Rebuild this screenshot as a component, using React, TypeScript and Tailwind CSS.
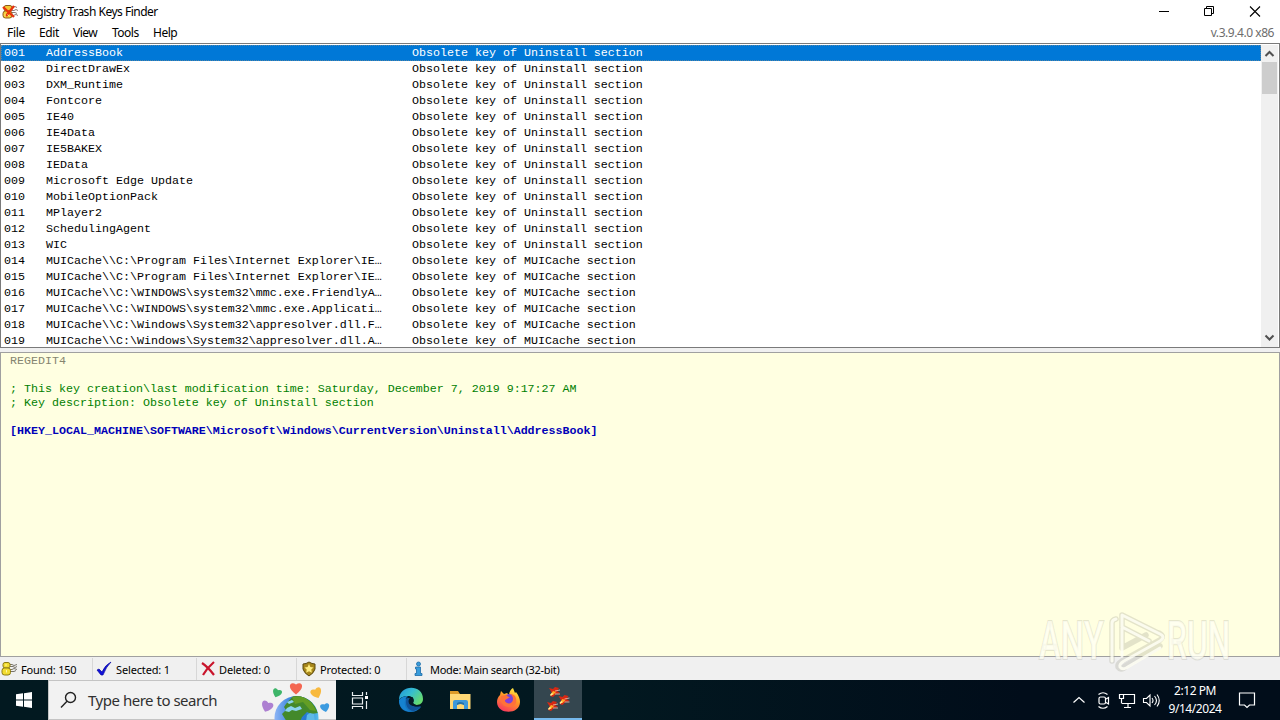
import React from "react";

const uninstall = ["AddressBook", "DirectDrawEx", "DXM_Runtime", "Fontcore", "IE40", "IE4Data", "IE5BAKEX", "IEData", "Microsoft Edge Update", "MobileOptionPack", "MPlayer2", "SchedulingAgent", "WIC"];
const muiCache = [
  "MUICache\\\\C:\\Program Files\\Internet Explorer\\IE…",
  "MUICache\\\\C:\\Program Files\\Internet Explorer\\IE…",
  "MUICache\\\\C:\\WINDOWS\\system32\\mmc.exe.FriendlyA…",
  "MUICache\\\\C:\\WINDOWS\\system32\\mmc.exe.Applicati…",
  "MUICache\\\\C:\\Windows\\System32\\appresolver.dll.F…",
  "MUICache\\\\C:\\Windows\\System32\\appresolver.dll.A…",
];
const rows = [
  ...uninstall.map((name) => ({ name, note: "Obsolete key of Uninstall section" })),
  ...muiCache.map((name) => ({ name, note: "Obsolete key of MUICache section" })),
];

function AppIcon() {
  return (
    <svg width="17" height="16" viewBox="0 0 17 16" className="shrink-0">
      <g fill="none" stroke="#8a7a78" strokeWidth="1"><path d="M10 3.500l3-1 2 1M10 6.500h2l2-1 2 1M10 8.500h3l2 1M11 11.500l3-1 2 1" /></g>
      <rect x="2" y="1.500" width="8" height="5.500" rx="2" fill="#f4c832" stroke="#8c5a1c" />
      <rect x="1" y="7" width="9" height="7" rx="2.500" fill="#f4c832" stroke="#8c5a1c" />
      <path d="M1 3l11 10M12 2L4 12" fill="none" stroke="#e8320c" strokeWidth="2.300" />
      <path d="M3 9.500v3M5.500 10.500l2 2" stroke="#ffe87a" />
    </svg>
  );
}

function KeyIcon() {
  return (
    <svg width="17" height="16" viewBox="0 0 17 16" className="shrink-0">
      <g fill="none" stroke="#77736a"><path d="M9 3.500h2l2 1 3-1M9 5.500h3l2 1 2-1M9 8.500h2l2-1 3 1M9 10.500h4l2-1" /></g>
      <rect x="2" y="1.500" width="7" height="5.500" rx="2" fill="#f2dc30" stroke="#8c7a14" />
      <rect x="1" y="7" width="8.500" height="7" rx="2.500" fill="#f2dc30" stroke="#8c7a14" />
      <path d="M5 3v2M5.500 9v2.500" stroke="#fff7a0" />
    </svg>
  );
}

function TitleBar() {
  return (
    <header className="flex h-[23px] shrink-0 items-center pl-[2px]">
      <AppIcon />
      <span className="ml-[4px] text-[12px] leading-[20px] tracking-[-0.49px]">Registry Trash Keys Finder</span>
      <div className="ml-auto flex h-[22px] items-start">
        <svg width="122" height="22" viewBox="1158 0 122 22" fill="none" stroke="#000">
          <path d="M1159 10.500h10" />
          <path d="M1204.500 7.500h7v7h-7zM1206.500 7.500v-2h7v7h-2" />
          <path d="M1250 5.500l10 10M1260 5.500l-10 10" strokeWidth="1.100" />
        </svg>
      </div>
    </header>
  );
}

function MenuBar() {
  return (
    <nav className="flex h-[20px] shrink-0 items-center text-[12px] leading-[18px]">
      <span className="w-[32px] pl-[7px] tracking-[-0.3px]">File</span>
      <span className="w-[34px] pl-[7px] tracking-[-0.4px]">Edit</span>
      <span className="w-[39px] pl-[7px] tracking-[-0.5px]">View</span>
      <span className="w-[41px] pl-[7px] tracking-[-0.5px]">Tools</span>
      <span className="pl-[7px] tracking-[-0.5px]">Help</span>
      <span className="ml-auto pr-[6px] tracking-[-0.45px] text-[#6d6d6d]">v.3.9.4.0 x86</span>
    </nav>
  );
}

function ResultList() {
  return (
    <section className="flex h-[305px] shrink-0 overflow-hidden border border-[#7a7a7a] pt-px">
      <div className="flex min-w-0 flex-1 flex-col overflow-hidden font-['Liberation_Mono',monospace] text-[11.667px]">
        {rows.map((row, index) => (
          <div
            key={index}
            className={index === 0
              ? "flex h-[16px] shrink-0 whitespace-pre bg-[#0078d7] pl-[3px] leading-[16px] text-white outline-1 -outline-offset-1 outline-dotted outline-[#5a85a0]"
              : "flex h-[16px] shrink-0 whitespace-pre pl-[3px] leading-[16px] text-black"}
          >
            <span className="w-[42px]">{String(index + 1).padStart(3, "0")}</span>
            <span className="w-[366px]">{row.name}</span>
            <span>{row.note}</span>
          </div>
        ))}
      </div>
      <div className="mr-px flex w-[17px] shrink-0 flex-col items-center bg-[#f0f0f0]">
        <svg width="17" height="17" viewBox="0 0 17 17" fill="none" stroke="#505050" strokeWidth="2"><path d="M4.500 11l4-4 4 4" /></svg>
        <div className="h-[32px] w-[15px] bg-[#cdcdcd]" />
        <svg className="mt-auto" width="17" height="17" viewBox="0 0 17 17" fill="none" stroke="#505050" strokeWidth="2"><path d="M4.500 5.500l4 4 4-4" /></svg>
      </div>
    </section>
  );
}

function Details() {
  return (
    <section className="mt-[4px] h-[305px] shrink-0 border border-[#a0a0a0] bg-[#ffffe1] pl-[9px] pt-[1px] font-['Liberation_Mono',monospace] text-[11.667px] leading-[14px]">
      <pre className="font-[inherit] text-[#858570]">REGEDIT4</pre>
      <pre className="mt-[14px] font-[inherit] text-[#008000]">{"; This key creation\\last modification time: Saturday, December 7, 2019 9:17:27 AM\n; Key description: Obsolete key of Uninstall section"}</pre>
      <pre className="mt-[14px] font-[inherit] font-bold text-[#0000b8]">{"[HKEY_LOCAL_MACHINE\\SOFTWARE\\Microsoft\\Windows\\CurrentVersion\\Uninstall\\AddressBook]"}</pre>
    </section>
  );
}

function Watermark() {
  return (
    <svg className="absolute left-[1030px] top-[604px]" width="220" height="74" viewBox="1030 604 220 74">
      <g fontFamily="Roboto, sans-serif" fontSize="53" fontWeight="500" fill="#fffff4" fillOpacity=".75" stroke="#a8a898" strokeOpacity=".28" strokeWidth="2" paintOrder="stroke">
        <text transform="translate(1039 659) scale(.62 1)">ANY</text>
        <text transform="translate(1167 659) scale(.6 1)">RUN</text>
      </g>
      <g fill="none" strokeLinejoin="round" strokeLinecap="round">
        <path d="M1112 661v-38q0-3 4-4M1122 648v-33l38 19M1122 615v18M1122 627l27 14M1122 661l38-21q5-4-1-7M1122 668l38-22M1122 661q-5 3-4 6 2 3 6 1M1122 648l24-13" stroke="#a8a898" strokeOpacity=".32" strokeWidth="5.500" />
        <path d="M1112 661v-38q0-3 4-4M1122 656v-41l38 19q6 3 0 7l-36 20q-5 3-4 6 2 3 6 1l34-20M1122 627l27 14" stroke="#fffff4" strokeOpacity=".85" strokeWidth="3" />
      </g>
    </svg>
  );
}

function StatusBar() {
  return (
    <footer className="flex h-[23px] shrink-0 items-center bg-[#f0f0f0] text-[11px] leading-[16px]">
      <div className="flex h-[22px] w-[93px] items-center border-r border-[#d7d7d7] pl-[1px]">
        <KeyIcon /><span className="ml-[3px] pt-[2px] tracking-[-0.2px]">Found: 150</span>
      </div>
      <div className="flex h-[22px] w-[104px] items-center border-r border-[#d7d7d7] pl-[3px]">
        <svg width="16" height="16" viewBox="0 0 16 16"><path d="M1 9l2-1 3 3q3-7 9-10-5 5-8 13H5z" fill="#1010d8" stroke="#0808a0" strokeWidth=".7" /></svg>
        <span className="ml-[4px] pt-[2px] tracking-[-0.15px]">Selected: 1</span>
      </div>
      <div className="flex h-[22px] w-[100px] items-center border-r border-[#d7d7d7] pl-[4px]">
        <svg width="16" height="16" viewBox="0 0 16 16" fill="none" stroke="#c9152c" strokeWidth="2.200"><path d="M1 2q6 4 12 12M13 1Q6 7 2 14" /></svg>
        <span className="ml-[2px] pt-[2px] tracking-[-0.15px]">Deleted: 0</span>
      </div>
      <div className="flex h-[22px] w-[110px] items-center border-r border-[#d7d7d7] pl-[4px]">
        <svg width="16" height="16" viewBox="0 0 16 16"><path d="M2 3l3-.5L8 1l3 1.500 3 .5v5q-1 4-6 7-5-3-6-7z" fill="#a8871b" stroke="#5b4a10" /><path d="M8 3l1.400 3 3.100.4L10.300 8.600l.5 3.100L8 10.200l-2.800 1.500.5-3.100L3.500 6.400 6.600 6z" fill="#ffed82" /></svg>
        <span className="ml-[3px] pt-[2px] tracking-[-0.15px]">Protected: 0</span>
      </div>
      <div className="flex items-center pl-[6px]">
        <svg width="12" height="16" viewBox="0 0 12 16" fill="#399cdb" stroke="#1c6ca8" strokeWidth=".8"><circle cx="5.500" cy="3" r="2" /><path d="M2.500 6h5v6.500h1.500v2H2v-2h1.500V8h-1z" /></svg>
        <span className="ml-[5px] pt-[2px] tracking-[-0.3px]">Mode: Main search (32-bit)</span>
      </div>
    </footer>
  );
}

function Earth() {
  return (
    <svg width="76" height="40" viewBox="258 680 76 40">
      <defs>
        <linearGradient id="sea"><stop stopColor="#8eb5f5" /><stop offset=".35" stopColor="#3f87e0" /><stop offset=".7" stopColor="#2578d1" /><stop offset="1" stopColor="#57bded" /></linearGradient>
        <clipPath id="globe"><circle cx="296.500" cy="718" r="22" /></clipPath>
        <path id="heart" d="M0 6C-10-1-6-8 0-4 6-8 10-1 0 6z" />
      </defs>
      <circle cx="296.500" cy="718" r="22" fill="url(#sea)" />
      <g clipPath="url(#globe)" fill="#43892b">
        <path d="M286 704l7-8h8q12 3 17 17l-7 1-4-2-5 5-2 5h-13l-5-8 4-4-2-3z" />
        <path d="M292 697l9-1q11 4 15 15l-6-1-7-8-8 2z" fill="#639e25" />
        <path d="M287 708l4-2 4 2 5-2 2 3-6 2-4-1-3 2-4-1zM287 702l5-2 2 2-5 2z" fill="#8bd4ee" />
        <path d="M307 715l3-2 4 1 1 8h-9z" fill="#5eb9e8" />
      </g>
      <use href="#heart" transform="translate(296 688.500)" fill="#f46752" />
      <use href="#heart" transform="translate(277 693) rotate(20) scale(.75)" fill="#3eb569" />
      <use href="#heart" transform="translate(316.500 693) rotate(-22) scale(.9)" fill="#f8b93e" />
      <use href="#heart" transform="translate(267 706.500) rotate(20) scale(.95)" fill="#ad80d1" />
      <use href="#heart" transform="translate(325 707.500) rotate(-12) scale(.75)" fill="#3c9be0" />
    </svg>
  );
}

function EdgeIcon() {
  return (
    <svg width="26" height="26" viewBox="0 0 26 26">
      <defs><linearGradient id="edgeTop" x1="0" y1="0" x2="1" y2=".6"><stop stopColor="#2094dc" /><stop offset=".5" stopColor="#35bdd0" /><stop offset="1" stopColor="#66db70" /></linearGradient></defs>
      <path d="M1 13q0 12 12 12 6 0 10-5-7 2-10-2-3-3-1-7z" fill="#1473bf" />
      <path d="M1 13C1-3 25-3 25 12c0 7-9 7-10 4 2-4-1-7-5-7-5 0-8 2-9 4z" fill="url(#edgeTop)" />
      <path d="M1 13q3-4 9-4c-6 5-3 15 4 16-8 0-13-5-13-12z" fill="#1682d0" />
      <path d="M9 10c-3 7 1 14 7 14 3-1 6-3 7-5-8 2-12-2-12-6z" fill="#105399" />
      <path d="M14.500 10c-5 0-6 9 2 9 3 1 6-.5 6.500-1-3 1-6 0-8-2 1-2 1-4-.5-6z" fill="#051b29" />
    </svg>
  );
}

function FirefoxIcon() {
  return (
    <svg width="24" height="26" viewBox="0 0 24 26">
      <defs><linearGradient id="fire" x1=".8" y1="0" x2=".3" y2="1"><stop stopColor="#fff044" /><stop offset=".45" stopColor="#ff9825" /><stop offset="1" stopColor="#f9375e" /></linearGradient></defs>
      <path d="M3 8l1-4 3 3 3-1 2 2c0-3 2-6 4-7l2 5 1-1c3 4 4 7 4 10 0 13-23 13-23 0 0-3 1-5 3-7z" fill="url(#fire)" />
      <circle cx="12.500" cy="13" r="6" fill="#7647d6" />
      <path d="M4 9l5-1 4 3c-3 0-4 2-5 3 2 4 8 3 8-2 0-2-1-4-3-5 5 0 7 4 6 9-3 6-14 5-15-2z" fill="#ff7139" />
      <path d="M8 13l5-2q3 4-1 5-4-1-4-3z" fill="#853cde" />
    </svg>
  );
}

function TrashApp() {
  return (
    <svg width="24" height="26" viewBox="0 0 24 26">
      <defs>
        <g id="ship"><path d="M0 1l4 1 2-2 4 1-2 3 3 2-4 1-3 3-3-1 2-3z" fill="#d72813" /><path d="M1 8l3-4 3 1-3 3z" fill="#ffad28" /><path d="M1 8l2-2 1 1-2 2z" fill="#fff19b" /><path d="M6 4l5-1M6 7h5" stroke="#f3c1b0" strokeWidth=".8" /></g>
      </defs>
      <use href="#ship" x="3" y="1" /><use href="#ship" x="12.500" y="9" /><use href="#ship" x="1" y="15" />
    </svg>
  );
}

function Taskbar() {
  return (
    <footer className="flex h-[40px] shrink-0 bg-[linear-gradient(90deg,#021920_0%,#021820_48%,#010d1a_80%,#010d1a_100%)] text-white">
      <div className="flex w-[48px] items-center justify-center">
        <svg width="16" height="16" viewBox="0 0 16 16" fill="#fff"><path d="M0 2.300L7 1.300v6.200H0zM8 1.200L16 0v7.500H8zM0 8.500h7v6.200l-7-1zM8 8.500h8V16l-8-1.200z" /></svg>
      </div>
      <div className="flex w-[288px] items-center border-y border-l border-[#c4c4c4] bg-[#f2f2f2] pl-[11px] text-[#303030]">
        <svg width="17" height="18" viewBox="0 0 17 18" fill="none" stroke="#222" strokeWidth="1.400"><circle cx="10.500" cy="6.500" r="5" /><path d="M7 10.200L1 16.500" /></svg>
        <span className="ml-[11px] w-[140px] whitespace-nowrap text-[15px] tracking-[-0.48px]">Type here to search</span>
        <div className="ml-[30px]"><Earth /></div>
      </div>
      <div className="flex w-[48px] items-center justify-center">
        <svg width="18" height="17" viewBox="0 0 18 17" fill="none" stroke="#e9eef0" strokeWidth="1.200"><path d="M1.500 0v3.500h10V0M1.500 6h10v6h-10zM1.500 17v-2.500h10V17M15.500 0v3M15.500 9v8" /><path d="M14 4h3v3h-3z" fill="#fff" stroke="none" /></svg>
      </div>
      <div className="flex w-[53px] items-center justify-center"><EdgeIcon /></div>
      <div className="flex w-[46px] items-center justify-center">
        <svg width="23" height="21" viewBox="0 0 23 21"><path d="M1 1h8l2 3h10v4H1z" fill="#dd9b28" /><path d="M1 4h20.500v15H1z" fill="#ffd875" /><path d="M4 19v-7q0-2 2-2h11q2 0 2 2v7h-4v-4q-3-2-7 0v4z" fill="#3e99da" /><path d="M8 13q3-2 7 0v2q-4-2-7 0z" fill="#2673a8" /></svg>
      </div>
      <div className="flex w-[51px] items-center justify-center"><FirefoxIcon /></div>
      <div className="flex w-[48px] items-center justify-center border-b-2 border-[#76b9ed] bg-[#34464f]"><TrashApp /></div>
      <div className="ml-auto flex items-center">
        <svg width="90" height="24" viewBox="1072 688 90 24" fill="none" stroke="#fff" strokeWidth="1.200">
          <path d="M1073.500 702.500l5.500-5 5.500 5" />
          <rect x="1099" y="697" width="6.500" height="7" rx="1.500" /><path d="M1106 699l2.500-1.500v6.500l-2.500-1.500M1098.500 694.500q4.500-3.500 9 0M1098.500 706.500q4.500 3.500 9 0" />
          <path d="M1123 694.500h11.500v9H1122M1128 704v3M1124 707.500h7M1119.500 694.500h4v4h-4zM1121.500 699v4.500" />
          <path d="M1143.500 698.500h3l3.500-3.500v11l-3.500-3.500h-3zM1152 698q2 2.500 0 5M1154.500 696q4 4.500 0 9M1157 694.500q4.500 6 0 12" strokeWidth="1.100" />
        </svg>
        <div className="flex w-[66px] flex-col items-center text-[12px] leading-[18px] tracking-[-0.45px]">
          <span>2:12 PM</span><span>9/14/2024</span>
        </div>
        <svg className="ml-[9px] mr-[23px]" width="20" height="20" viewBox="0 0 20 20" fill="none" stroke="#fff" strokeWidth="1.200"><path d="M2.500 3h15v12h-5l-2.500 2.500L7.500 15h-5z" /></svg>
      </div>
    </footer>
  );
}

export default function App() {
  return (
    <main className="relative flex h-[720px] w-[1280px] flex-col overflow-hidden bg-white font-['Noto_Sans',sans-serif] text-black">
      <TitleBar />
      <MenuBar />
      <div className="flex h-[614px] shrink-0 flex-col bg-[#f0f0f0]">
        <div className="bg-white"><ResultList /></div>
        <Details />
      </div>
      <StatusBar />
      <Taskbar />
      <Watermark />
    </main>
  );
}
